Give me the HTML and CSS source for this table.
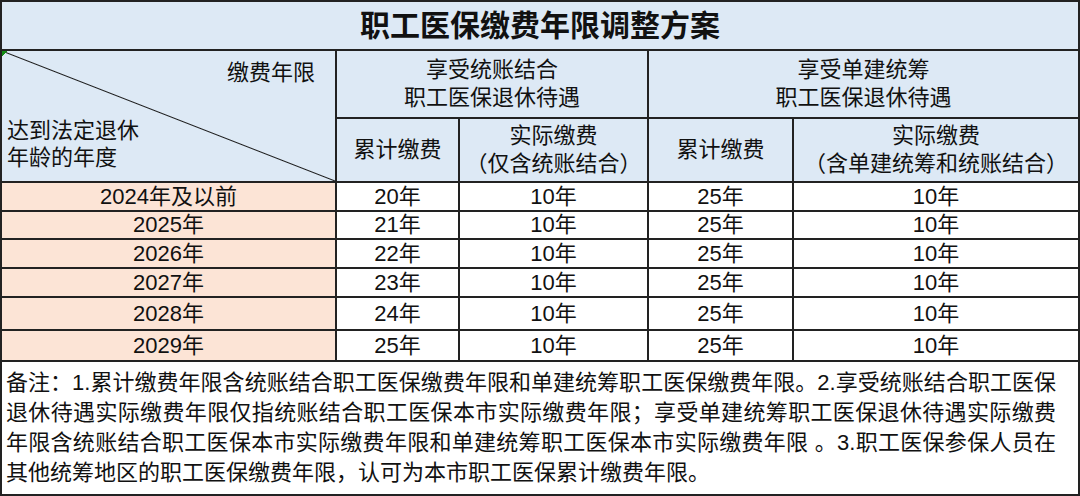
FILE: index.html
```html
<!DOCTYPE html>
<html lang="zh-CN">
<head>
<meta charset="utf-8">
<title>职工医保缴费年限调整方案</title>
<link rel="stylesheet" href="styles.css">
</head>
<body>
<div class="sheet">
  <div class="cell title">职工医保缴费年限调整方案</div>

  <div class="cell head diag">
    <div class="diag-top">缴费年限</div>
    <div class="diag-bottom">达到法定退休<br>年龄的年度</div>
  </div>
  <div class="cell head group">享受统账结合<br>职工医保退休待遇</div>
  <div class="cell head group">享受单建统筹<br>职工医保退休待遇</div>

  <div class="cell head">累计缴费</div>
  <div class="cell head">实际缴费<br>（仅含统账结合）</div>
  <div class="cell head">累计缴费</div>
  <div class="cell head">实际缴费<br>（含单建统筹和统账结合）</div>

  <div class="cell year">2024年及以前</div>
  <div class="cell">20年</div><div class="cell">10年</div><div class="cell">25年</div><div class="cell">10年</div>

  <div class="cell year">2025年</div>
  <div class="cell">21年</div><div class="cell">10年</div><div class="cell">25年</div><div class="cell">10年</div>

  <div class="cell year">2026年</div>
  <div class="cell">22年</div><div class="cell">10年</div><div class="cell">25年</div><div class="cell">10年</div>

  <div class="cell year">2027年</div>
  <div class="cell">23年</div><div class="cell">10年</div><div class="cell">25年</div><div class="cell">10年</div>

  <div class="cell year">2028年</div>
  <div class="cell">24年</div><div class="cell">10年</div><div class="cell">25年</div><div class="cell">10年</div>

  <div class="cell year">2029年</div>
  <div class="cell">25年</div><div class="cell">10年</div><div class="cell">25年</div><div class="cell">10年</div>

  <div class="cell note">
    <span class="line">备注：1.累计缴费年限含统账结合职工医保缴费年限和单建统筹职工医保缴费年限。2.享受统账结合职工医保</span>
    <span class="line">退休待遇实际缴费年限仅指统账结合职工医保本市实际缴费年限；享受单建统筹职工医保退休待遇实际缴费</span>
    <span class="line">年限含统账结合职工医保本市实际缴费年限和单建统筹职工医保本市实际缴费年限 。3.职工医保参保人员在</span>
    <span class="line last">其他统筹地区的职工医保缴费年限，认可为本市职工医保累计缴费年限。</span>
  </div>
</div>
</body>
</html>
```

FILE: styles.css
```css
html, body {
  margin: 0;
  padding: 0;
  background: #ffffff;
}

.sheet {
  width: 1080px;
  height: 496px;
  box-sizing: border-box;
  display: grid;
  grid-template-columns: 333px 121px 187px 143px 284px;
  grid-template-rows: 47px 66px 62px 27px 26px 27px 27px 31px 29px 132px;
  gap: 2px;
  padding: 2px;
  background: #222222;
  font-family: "Liberation Sans", "Noto Sans CJK SC", sans-serif;
  color: #111111;
  font-size: 22px;
}

.cell {
  background: #ffffff;
  display: flex;
  align-items: center;
  justify-content: center;
  text-align: center;
  line-height: 28px;
  white-space: nowrap;
}

.title {
  grid-column: 1 / 6;
  background: #dde9f5;
  font-size: 30px;
  font-weight: 700;
  letter-spacing: 0;
}

.head {
  background: #dde9f5;
}

.group {
  grid-column: span 2;
}

.diag {
  grid-row: 2 / 4;
  flex-direction: column;
  align-items: stretch;
  justify-content: space-between;
  padding: 8px 20px 10px 5px;
  line-height: 27px;
  background:
    linear-gradient(135deg, #138a13 4px, transparent 4px) top left / 8px 8px no-repeat,
    linear-gradient(to top right, #dde9f5 calc(50% - 1px), #1a1a1a 50%, #dde9f5 calc(50% + 1px));
}

.diag-top {
  text-align: right;
}

.diag-bottom {
  text-align: left;
}

.year {
  background: #fce4d6;
}

.note {
  grid-column: 1 / 6;
  display: block;
  text-align: left;
  line-height: 30px;
  padding: 6px 22px 0 4px;
}

.line {
  display: block;
  text-align: justify;
  text-align-last: justify;
}

.line.last {
  text-align-last: left;
}
```
